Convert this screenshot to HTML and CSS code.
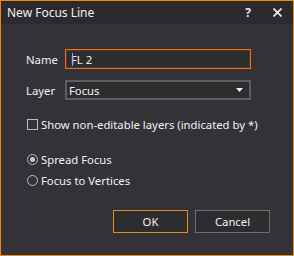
FILE: index.html
```html
<!DOCTYPE html>
<html>
<head>
<meta charset="utf-8">
<link rel="stylesheet" href="styles.css">
</head>
<body>
<div class="dialog">
  <div class="titlebar">
    <span class="title">New Focus Line</span>
    <span class="help">?</span>
    <svg class="close" width="9" height="9" viewBox="0 0 9 9"><path d="M0.5 0.5 L8.5 8.5 M8.5 0.5 L0.5 8.5" stroke="#f2f2f2" stroke-width="1.6"/></svg>
  </div>
  <div class="content">
    <div class="row name-row">
      <label class="label">Name</label>
      <div class="input"><span class="caret"></span>FL 2</div>
    </div>
    <div class="row layer-row">
      <label class="label">Layer</label>
      <div class="select"><span>Focus</span><svg class="arrow" width="7" height="4" viewBox="0 0 7 4"><polygon points="0,0 7,0 3.5,4" fill="#f2f2f2"/></svg></div>
    </div>
    <div class="check-row">
      <span class="checkbox"></span>
      <span>Show non-editable layers (indicated by *)</span>
    </div>
    <div class="radio-row first">
      <span class="radio checked"><span class="dot"></span></span>
      <span>Spread Focus</span>
    </div>
    <div class="radio-row">
      <span class="radio"></span>
      <span>Focus to Vertices</span>
    </div>
    <div class="buttons">
      <div class="btn default">OK</div>
      <div class="btn">Cancel</div>
    </div>
  </div>
</div>
</body>
</html>
```
FILE: styles.css
```css
html, body {
  margin: 0;
  padding: 0;
  background: #333337;
}
.dialog {
  width: 294px;
  height: 256px;
  box-sizing: border-box;
  border: 1px solid #f0860f;
  background: #333337;
  font-family: "Noto Sans", "DejaVu Sans", sans-serif;
  font-size: 11.3px;
  color: #f1f1f1;
  display: flex;
  flex-direction: column;
}
.titlebar {
  height: 23px;
  background: #2b2b2e;
  display: flex;
  align-items: center;
  padding-left: 6px;
  padding-right: 11px;
}
.title {
  flex: 1;
  font-size: 12px;
}
.help {
  font-weight: bold;
  font-size: 12px;
  margin-right: 22px;
  color: #e8e8f0;
}
.close {
  display: block;
}
.content {
  padding-left: 25px;
  display: flex;
  flex-direction: column;
}
.row {
  display: flex;
  align-items: center;
  height: 20px;
}
.name-row { margin-top: 25px; }
.layer-row { margin-top: 11px; }
.label {
  width: 39px;
}
.input {
  width: 186px;
  height: 20px;
  box-sizing: border-box;
  border: 1px solid #ff6a00;
  box-shadow: inset 0 0 0 1px #3d3d42;
  background: #2d2d30;
  display: flex;
  align-items: center;
  padding-left: 5px;
  position: relative;
}
.caret {
  position: absolute;
  left: 6px;
  top: 3px;
  width: 1px;
  height: 13px;
  background: #8fa6ff;
}
.select {
  width: 186px;
  height: 20px;
  box-sizing: border-box;
  border: 2px solid #5f5f62;
  background: #2d2d30;
  display: flex;
  align-items: center;
  justify-content: space-between;
  padding-left: 2px;
  padding-right: 6px;
}
.arrow { display: block; }
.check-row, .radio-row {
  display: flex;
  align-items: center;
  height: 15px;
  padding-left: 1px;
}
.check-row { margin-top: 17px; }
.radio-row.first { margin-top: 20px; }
.radio-row { margin-top: 6px; }
.checkbox {
  width: 11px;
  height: 11px;
  box-sizing: border-box;
  border: 1px solid #bdbdbd;
  margin-right: 3px;
}
.radio {
  width: 11px;
  height: 11px;
  box-sizing: border-box;
  border: 1px solid #bdbdbd;
  border-radius: 50%;
  margin-right: 3px;
  display: flex;
  align-items: center;
  justify-content: center;
}
.dot {
  width: 5px;
  height: 5px;
  border-radius: 50%;
  background: #c9c9c9;
}
.buttons {
  display: flex;
  gap: 7px;
  margin-top: 22px;
  padding-left: 87px;
}
.btn {
  width: 75px;
  height: 23px;
  box-sizing: border-box;
  border: 1px solid #6e6e70;
  background: #2d2d30;
  display: flex;
  align-items: center;
  justify-content: center;
}
.btn.default {
  border-color: #ea8a1a;
}
```
